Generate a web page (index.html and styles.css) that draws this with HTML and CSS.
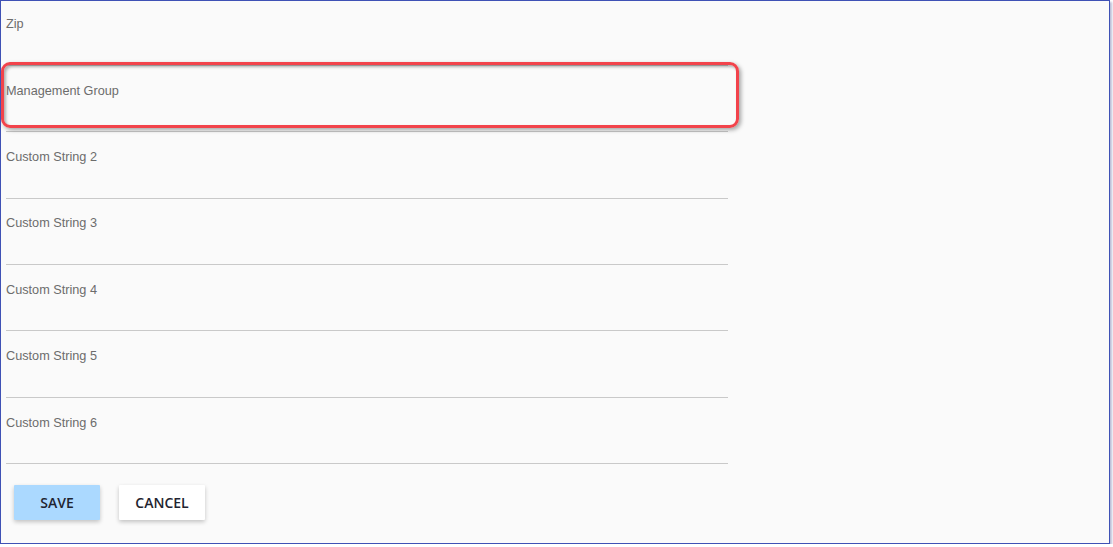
FILE: index.html
```html
<!DOCTYPE html>
<html>
<head>
<meta charset="utf-8">
<link rel="stylesheet" href="styles.css">
</head>
<body>
<div class="frame">
  <form class="form">
    <div class="field"><span class="label">Zip</span></div>
    <div class="field"><span class="label">Management Group</span></div>
    <div class="field"><span class="label">Custom String 2</span></div>
    <div class="field"><span class="label">Custom String 3</span></div>
    <div class="field"><span class="label">Custom String 4</span></div>
    <div class="field"><span class="label">Custom String 5</span></div>
    <div class="field"><span class="label">Custom String 6</span></div>
    <div class="actions">
      <button type="button" class="btn btn-save">SAVE</button>
      <button type="button" class="btn btn-cancel">CANCEL</button>
    </div>
  </form>
  <div class="highlight"></div>
</div>
</body>
</html>
```
FILE: styles.css
```css
html, body {
  margin: 0;
  padding: 0;
  background: #ffffff;
}
.frame {
  position: relative;
  box-sizing: border-box;
  width: 1110px;
  height: 544px;
  border: 1px solid #3f51b5;
  background: #fafafa;
  overflow: hidden;
  box-shadow: 2px 2px 2px rgba(60, 70, 140, 0.35);
}
.form {
  margin: -1.6px 0 0 5px;
  width: 722px;
}
.field {
  box-sizing: border-box;
  height: 66.4px;
  padding-top: 17.8px;
  border-bottom: 1px solid #c9c9c9;
}
.label {
  display: block;
  font-family: "Liberation Sans", Arial, sans-serif;
  font-size: 12.7px;
  line-height: 15px;
  color: #6c6c6c;
}
.actions {
  display: flex;
  gap: 19px;
  margin-top: 21px;
  padding-left: 8px;
}
.btn {
  width: 86px;
  height: 35px;
  border: none;
  border-radius: 1px;
  font-family: "Open Sans", sans-serif;
  font-weight: 600;
  font-size: 14px;
  color: #1f2430;
  box-shadow: 0 2px 4px rgba(0, 0, 0, 0.22);
  padding: 0;
}
.btn-save {
  background: #abd9ff;
}
.btn-cancel {
  background: #ffffff;
}
.highlight {
  position: absolute;
  left: 0;
  top: 61px;
  width: 738px;
  height: 66px;
  box-sizing: border-box;
  border: 3px solid #f2434b;
  border-radius: 9px;
  box-shadow: 2px 2px 4px rgba(0, 0, 0, 0.35), inset 2px 2px 3px rgba(0, 0, 0, 0.3);
}
```
